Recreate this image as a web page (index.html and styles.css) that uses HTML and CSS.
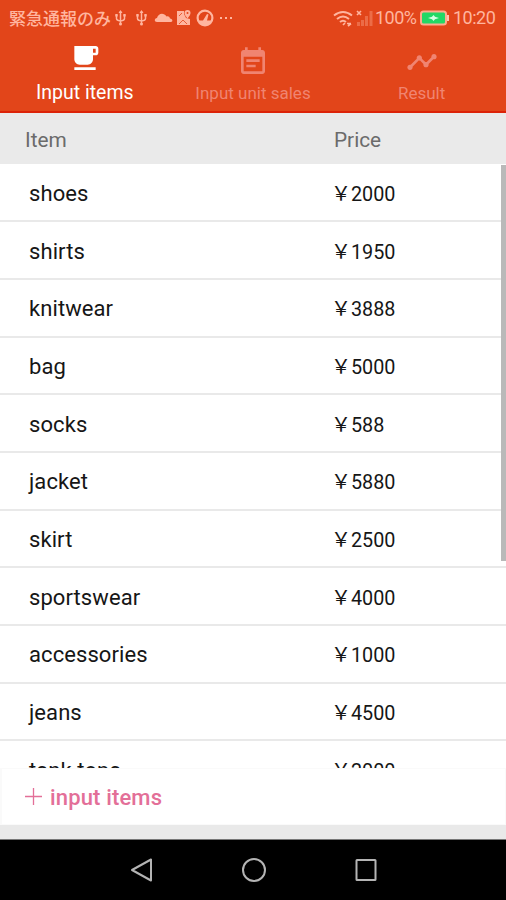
FILE: index.html
```html
<!DOCTYPE html>
<html lang="ja">
<head>
<meta charset="utf-8">
<title>Input items</title>
<link rel="stylesheet" href="styles.css">
</head>
<body>
<div class="screen">
  <header class="top">
    <div class="status">
      <span class="carrier">緊急通報のみ</span>
      <svg class="status-left" width="124" height="20" viewBox="0 0 124 20" fill="none" stroke="currentColor" stroke-width="1.5">
        <g id="usb"><path d="M10.500 3v13M6.500 7v3.500q0 2 4 2.500q4-.5 4-2.500V7"/><path d="M8.500 5l2-3 2 3zM5.300 6h2.400v2.400H5.300zM13.300 6h2.400v2.400h-2.400z" fill="currentColor" stroke="none"/><circle cx="10.500" cy="16" r="1.500" fill="currentColor" stroke="none"/></g>
        <use href="#usb" x="21"/>
        <path d="M47 14c-3 0-3-3.500 0-4 1-5 7-6 9.500-1.500 2-.5 3 .5 3.500 2 3 .5 3 3.500 1 3.500z" fill="currentColor" stroke="none"/>
        <path d="M67 3h7v3l2 4 4 1v6H67z" fill="currentColor" stroke="none"/>
        <path d="M69 8l3-3M69 16l4-4 4 4" stroke="#e2451a" stroke-width=".8"/>
        <path d="M77.500 2a3 3 0 0 1 3 3q0 2-3 5.500Q74.500 7 74.500 5a3 3 0 0 1 3-3z" fill="currentColor" stroke="none"/>
        <circle cx="77.500" cy="5" r="1" fill="#e2451a" stroke="none"/>
        <circle cx="95" cy="10" r="7.400" stroke-width="2.200"/>
        <path d="M88 12.500h5l4-6.500 1.500.5-1.500 6h5l-3 4.500h-8z" fill="currentColor" stroke="none"/>
        <path d="M110 10h2M115 10h2M120 10h2" stroke-width="2"/>
      </svg>
      <svg class="status-right" width="41" height="20" viewBox="0 0 41 20" fill="none" stroke="currentColor" stroke-width="2">
        <path d="M1 7.500q9-7 18 0M4 11q6-5 12 0M7 14q3-2.500 6 0"/>
        <path d="M10 17l2-2M14 15.500h4M15 18l3-2.500" stroke-width="1.700"/>
        <path d="M24 3l4 4M28 3l-4 4" stroke-width="1.600"/>
        <g opacity=".35"><path d="M25.500 18v-4M29.500 18v-6M33.500 18V8M38 18V3" stroke-width="3"/></g>
      </svg>
      <span class="percent">100%</span>
      <svg class="battery" width="29" height="16" viewBox="0 0 29 16">
        <rect x="1" y="1.500" width="25" height="13" rx="2.500" fill="#22d865" stroke="#ffab8f" stroke-width="2"/>
        <path d="M27 5h2v6h-2z" fill="#ffc3b1"/>
        <path d="M8 8l4-1.200L13.500 5 15 6.800 19 8l-4 1.200-1.500 1.800L12 9.200z" fill="#d4ffe3"/>
      </svg>
      <span class="clock">10:20</span>
    </div>
    <nav class="tabs">
      <div class="tab active">
        <svg width="32" height="32" viewBox="0 0 24 24" fill="currentColor"><path d="M20 3H4v10c0 2.210 1.790 4 4 4h6c2.210 0 4-1.790 4-4v-3h2c1.110 0 2-.89 2-2V5c0-1.110-.89-2-2-2zm0 5h-2V5h2v3zM4 19h16v2H4z"/></svg>
        <span>Input items</span>
      </div>
      <div class="tab">
        <svg width="32" height="32" viewBox="0 0 24 24" fill="currentColor"><path d="M17 10H7v2h10v-2zm2-7h-1V1h-2v2H8V1H6v2H5c-1.110 0-2 .9-2 2v14c0 1.100.89 2 2 2h14c1.100 0 2-.9 2-2V5c0-1.100-.9-2-2-2zm0 16H5V8h14v11zm-5-5H7v2h7v-2z"/></svg>
        <span>Input unit sales</span>
      </div>
      <div class="tab">
        <svg width="32" height="32" viewBox="0 0 24 24" fill="currentColor"><path d="M23 8c0 1.100-.9 2-2 2-.18 0-.35-.02-.51-.07l-3.560 3.550c.05.16.07.34.07.52 0 1.100-.9 2-2 2s-2-.9-2-2c0-.18.02-.36.07-.52l-2.550-2.550c-.16.05-.34.07-.52.07s-.36-.02-.52-.07l-4.550 4.560c.05.16.07.33.07.51 0 1.100-.9 2-2 2s-2-.9-2-2 .9-2 2-2c.18 0 .35.02.51.07l4.560-4.550C8.020 9.360 8 9.180 8 9c0-1.100.9-2 2-2s2 .9 2 2c0 .18-.02.36-.07.52l2.550 2.550c.16-.05.34-.07.52-.07s.36.020.52.07l3.550-3.560C19.020 8.350 19 8.180 19 8c0-1.100.9-2 2-2s2 .9 2 2z"/></svg>
        <span>Result</span>
      </div>
    </nav>
  </header>
  <div class="columns"><span>Item</span><span>Price</span></div>
  <main class="list">
    <div class="row"><span>shoes</span><span class="price"><i>￥</i>2000</span></div>
    <div class="row"><span>shirts</span><span class="price"><i>￥</i>1950</span></div>
    <div class="row"><span>knitwear</span><span class="price"><i>￥</i>3888</span></div>
    <div class="row"><span>bag</span><span class="price"><i>￥</i>5000</span></div>
    <div class="row"><span>socks</span><span class="price"><i>￥</i>588</span></div>
    <div class="row"><span>jacket</span><span class="price"><i>￥</i>5880</span></div>
    <div class="row"><span>skirt</span><span class="price"><i>￥</i>2500</span></div>
    <div class="row"><span>sportswear</span><span class="price"><i>￥</i>4000</span></div>
    <div class="row"><span>accessories</span><span class="price"><i>￥</i>1000</span></div>
    <div class="row"><span>jeans</span><span class="price"><i>￥</i>4500</span></div>
    <div class="row"><span>tank tops</span><span class="price"><i>￥</i>2000</span></div>
    <div class="scrollbar"></div>
  </main>
  <div class="add">
    <svg width="17" height="17" viewBox="0 0 17 17" stroke="currentColor" stroke-width="1.300"><path d="M8.500 0v17M0 8.500h17"/></svg>
    <span>input items</span>
  </div>
  <footer class="nav">
    <svg width="24" height="26" viewBox="0 0 24 26"><path d="M21 2.500v21L2 13z"/></svg>
    <svg width="26" height="26" viewBox="0 0 26 26"><circle cx="13" cy="13" r="11"/></svg>
    <svg width="24" height="26" viewBox="0 0 24 26"><rect x="2.500" y="3" width="19" height="20" rx=".5"/></svg>
  </footer>
</div>
</body>
</html>
```
FILE: styles.css
```css
* { box-sizing: border-box; }
body { margin: 0; font-family: Roboto, "Noto Sans CJK JP", sans-serif; }
.screen { width: 506px; height: 900px; display: flex; flex-direction: column; background: #e9e9e9; overflow: hidden; }
.top { height: 113px; flex: none; background: #e2451a; border-bottom: 2px solid #dc2308; }
.status { height: 35px; display: flex; align-items: center; padding-left: 9px; color: #ffb59f; white-space: nowrap; }
.carrier { font: 500 17px/34px "Noto Sans CJK JP", sans-serif; width: 101px; }
.status-left { flex: none; }
.status-right { margin-left: 99px; flex: none; }
.percent { font-size: 18px; width: 43px; margin-left: 1px; letter-spacing: -.5px; }
.battery { margin-left: 2px; flex: none; }
.clock { font-size: 18px; margin-left: 4px; letter-spacing: -.5px; }
.tabs { display: grid; grid-template-columns: repeat(3, 1fr); height: 76px; }
.tab { display: flex; flex-direction: column; align-items: center; padding-top: 11px; color: #f08471; font-size: 17px; line-height: 20px; white-space: nowrap; }
.tab svg { flex: none; margin-left: 1px; }
.tab span { margin-top: 5px; }
.tab.active { color: #fff; font-size: 19.5px; padding-top: 7px; }
.tab.active svg { margin-left: 2px; }
.tab.active span { margin-top: 9px; margin-left: 1px; }
.columns { height: 51px; flex: none; display: grid; grid-template-columns: 309px 1fr; align-items: center; padding: 3px 0 0 25px; background: #eaeaea; color: #6b6b6b; font-size: 20.8px; }
.list { position: relative; height: 604px; flex: none; overflow: hidden; background: #fff; padding-top: .5px; }
.row { height: 57.700px; display: grid; grid-template-columns: 302px 1fr; align-items: center; padding: 3px 0 0 29px; border-bottom: 2.500px solid #e9e9e9; color: #161616; font-size: 22px; line-height: 26px; letter-spacing: .08px; }
.price { display: flex; padding-top: 2px; font-size: 19.800px; letter-spacing: 0; }
.price i { width: 20px; margin-top: -2px; font: 20px/26px "Noto Sans CJK JP", sans-serif; }
.scrollbar { position: absolute; top: 1px; right: 0; width: 5px; height: 396px; background: #b9b9b9; }
.add { height: 57px; flex: none; display: flex; align-items: center; gap: 8px; padding: 2px 0 0 24px; background: #fff; border: 2px solid #fafafa; border-width: 1px 1px 1px 2px; color: #e36f98; font-size: 22px; font-weight: 500; letter-spacing: .15px; }
.add svg { margin: -2px 0 0 -1px; }
.nav { height: 61px; margin-top: 14px; flex: none; background: #000; border-top: 1px solid #777; display: flex; justify-content: center; gap: 87px; padding: 17px 0 0 1px; }
.nav svg { fill: none; stroke: #b4b4b4; stroke-width: 2; stroke-linejoin: round; }
```
